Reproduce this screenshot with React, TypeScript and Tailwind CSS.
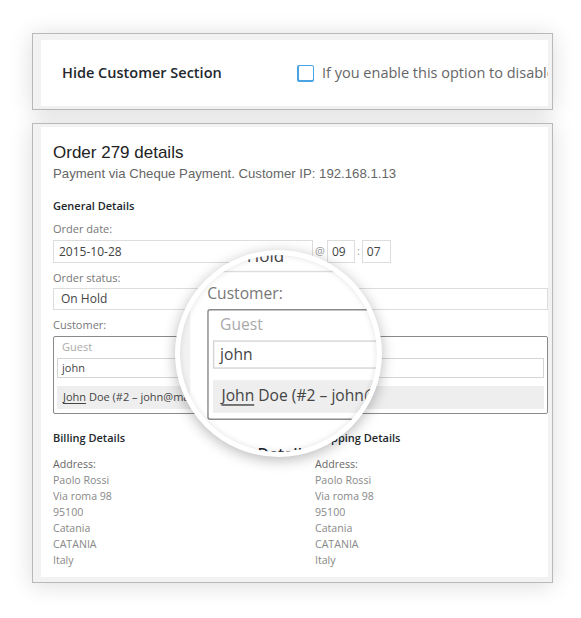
const sans = "font-['Open_Sans',sans-serif]";
const arial = "font-['Liberation_Sans',Arial,sans-serif]";

function Field({ label }: { label: string }) {
  return <div className={`${sans} text-[11px] leading-[14px] text-[#777]`}>{label}</div>;
}

function Address({ title }: { title: string }) {
  const lines = ['Paolo Rossi', 'Via roma 98', '95100', 'Catania', 'CATANIA', 'Italy'];
  return (
    <div>
      <h4 className="text-[11px] leading-[14px] font-semibold text-[#23282d]">{title}</h4>
      <div className="mt-[11px] text-[10.6px] leading-[16px] text-[#888]">
        <div className="text-[#666]">Address:</div>
        {lines.map((l) => (
          <div key={l}>{l}</div>
        ))}
      </div>
    </div>
  );
}

function Page() {
  return (
    <div className={`w-[581px] h-[618px] bg-white pt-[33px] pl-[32px] pr-[28px] ${sans}`}>
      {/* settings row */}
      <div className="border border-[#b9b9b9] bg-[#f2f2f2] pt-[6px] pl-[8px] pr-[4px] pb-[3px] shadow-[0_2px_22px_rgba(0,0,0,0.14)]">
        <div className="h-[66px] bg-white flex items-center pl-[21px] overflow-hidden whitespace-nowrap">
          <div className="w-[235px] shrink-0 text-[14.5px] font-semibold text-[#23282d]">Hide Customer Section</div>
          <div className="w-[17px] h-[17px] shrink-0 rounded-[2px] bg-[#4aa3e2] p-[1.5px]">
            <div className="w-full h-full rounded-[1px] bg-white" />
          </div>
          <span className="ml-[8px] text-[14.5px] text-[#666]">If you enable this option to disable the customer section</span>
        </div>
      </div>

      {/* order panel */}
      <div className="mt-[13px] border border-[#b9b9b9] bg-[#f2f2f2] pt-[3px] pl-[8px] pr-[4px] pb-[5px] shadow-[0_2px_22px_rgba(0,0,0,0.14)]">
        <div className="h-[450px] bg-white pl-[12px] pt-[16px] overflow-hidden">
          <h2 className={`${arial} text-[17px] leading-[20px] text-[#222]`}>Order 279 details</h2>
          <p className={`${arial} mt-[3px] text-[13.2px] leading-[16px] text-[#666]`}>
            Payment via Cheque Payment. Customer IP: 192.168.1.13
          </p>

          <h3 className="mt-[17px] text-[11px] leading-[14px] font-semibold text-[#23282d]">General Details</h3>

          <div className="mt-[9px]">
            <Field label="Order date:" />
            <div className="mt-[4px] flex items-center text-[12px] text-[#444]">
              <div className="w-[260px] h-[23px] border border-[#ddd] flex items-center pl-[5px]">2015-10-28</div>
              <span className="mx-[2px] text-[11px] text-[#999]">@</span>
              <div className="w-[28px] h-[23px] border border-[#ddd] flex items-center pl-[4px]">09</div>
              <span className="mx-[2px] text-[11px] text-[#999]">:</span>
              <div className="w-[29px] h-[23px] border border-[#ddd] flex items-center pl-[4px]">07</div>
            </div>
          </div>

          <div className="mt-[8px]">
            <Field label="Order status:" />
            <div className="mt-[3px] h-[22px] border border-[#ddd] flex items-center pl-[7px] text-[12px] text-[#444]">
              On Hold
            </div>
          </div>

          <div className="mt-[8px]">
            <Field label="Customer:" />
            <div className="mt-[4px] h-[78px] border border-[#8a8a8a] rounded-[2px] px-[3px] pt-[3px] text-[11px]">
              <div className="pl-[5px] leading-[14px] text-[#aaa]">Guest</div>
              <div className="mt-[4px] h-[20px] border border-[#d5d5d5] flex items-center pl-[4px] text-[#444]">john</div>
              <div className="mt-[8px] h-[23px] bg-[#eee] flex items-center pl-[6px] text-[#444] whitespace-nowrap">
                <span className="underline underline-offset-2">John</span>&nbsp;Doe (#2 – john@mail.com)
              </div>
            </div>
          </div>

          <div className="mt-[17px] grid grid-cols-[262px_1fr]">
            <Address title="Billing Details" />
            <Address title="Shipping Details" />
          </div>
        </div>
      </div>
    </div>
  );
}

export default function App() {
  return (
    <div className="relative w-[581px] h-[618px] overflow-hidden bg-white">
      <Page />
      {/* magnifier lens */}
      <div className="absolute left-[175px] top-[250px] w-[207px] h-[207px] rounded-full border-[5px] border-white bg-white overflow-hidden shadow-[0_3px_14px_rgba(0,0,0,0.28)]">
        <div className="absolute left-[-48px] top-[-423px] origin-top-left scale-[1.42]">
          <Page />
        </div>
        <div className="absolute inset-0 rounded-full shadow-[inset_0_0_6px_rgba(0,0,0,0.12)]" />
      </div>
    </div>
  );
}
